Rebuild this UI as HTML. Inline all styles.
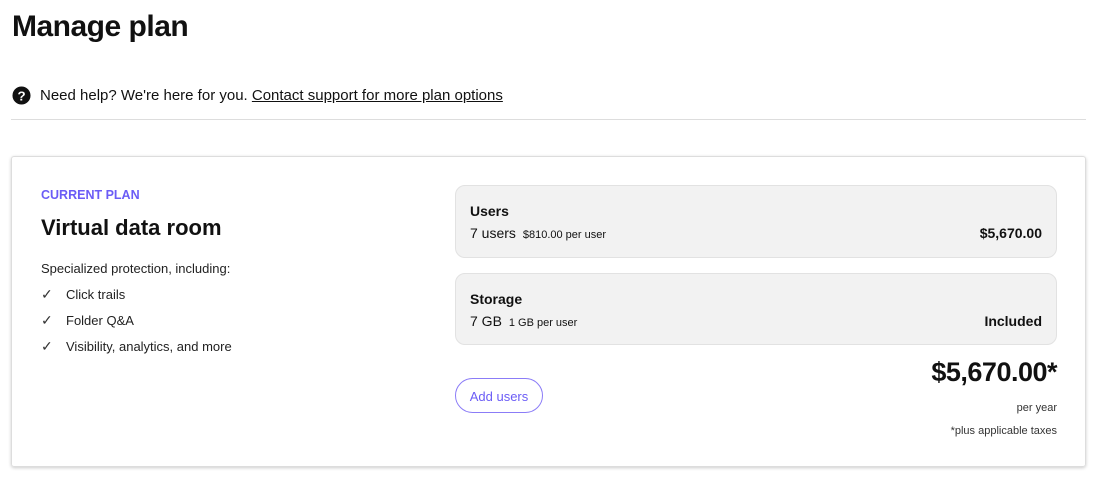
<!DOCTYPE html>
<html><head><style>
*{margin:0;padding:0;box-sizing:border-box}
body{width:1100px;height:477px;background:#fff;font-family:"Liberation Sans",sans-serif;color:#111;position:relative;overflow:hidden}
.a{position:absolute;white-space:nowrap}
h1{position:absolute;left:12px;top:10px;font-size:30px;font-weight:bold;letter-spacing:-0.5px}
.card{position:absolute;left:11px;top:156px;width:1075px;height:311px;border:1px solid #ddd;border-radius:3px;box-shadow:0 1px 3px rgba(0,0,0,.2)}
.box{position:absolute;left:455px;width:602px;background:#f2f2f2;border:1px solid #e2e2e2;border-radius:10px}
.chk{font-size:14px;color:#333}
.it{font-size:13px;color:#222}
</style></head><body>
<h1>Manage plan</h1>
<svg class="a" style="left:12px;top:86px" width="19" height="19" viewBox="0 0 20 20"><circle cx="10" cy="10" r="9.5" fill="#111"/><text x="10" y="15" font-size="14" font-weight="bold" fill="#fff" text-anchor="middle" font-family="Liberation Sans">?</text></svg>
<div class="a" style="left:40px;top:87px;font-size:15px">Need help? We're here for you. <span style="text-decoration:underline">Contact support for more plan options</span></div>
<div class="a" style="left:11px;top:119px;width:1075px;height:1px;background:#ddd"></div>
<div class="card"></div>
<div class="a" style="left:41px;top:188px;font-size:12.5px;font-weight:bold;color:#6b5cf6">CURRENT PLAN</div>
<div class="a" style="left:41px;top:215px;font-size:22px;font-weight:bold">Virtual data room</div>
<div class="a" style="left:41px;top:261px;font-size:13px;color:#222">Specialized protection, including:</div>
<div class="a chk" style="left:41px;top:286px">✓</div><div class="a it" style="left:66px;top:287px">Click trails</div>
<div class="a chk" style="left:41px;top:312px">✓</div><div class="a it" style="left:66px;top:313px">Folder Q&amp;A</div>
<div class="a chk" style="left:41px;top:338px">✓</div><div class="a it" style="left:66px;top:339px">Visibility, analytics, and more</div>
<div class="box" style="top:185px;height:73px"></div>
<div class="a" style="left:470px;top:203px;font-size:14px;font-weight:bold">Users</div>
<div class="a" style="left:470px;top:225px;font-size:14px">7 users <span style="font-size:11px">&nbsp;$810.00 per user</span></div>
<div class="a" style="right:58px;top:225px;font-size:14px;font-weight:bold">$5,670.00</div>
<div class="box" style="top:273px;height:72px"></div>
<div class="a" style="left:470px;top:291px;font-size:14px;font-weight:bold">Storage</div>
<div class="a" style="left:470px;top:313px;font-size:14px">7 GB <span style="font-size:11px">&nbsp;1 GB per user</span></div>
<div class="a" style="right:58px;top:313px;font-size:14px;font-weight:bold">Included</div>
<div class="a" style="right:43px;top:357px;font-size:27px;font-weight:bold;letter-spacing:-0.5px">$5,670.00*</div>
<div class="a" style="right:43px;top:402px;font-size:11px;color:#333">per year</div>
<div class="a" style="right:43px;top:425px;font-size:11px;color:#333">*plus applicable taxes</div>
<div class="a" style="left:455px;top:378px;width:88px;height:35px;border:1.5px solid #8b7cf7;border-radius:18px;color:#6b5cf6;font-size:13px;text-align:center;line-height:35px">Add users</div>
</body></html>
